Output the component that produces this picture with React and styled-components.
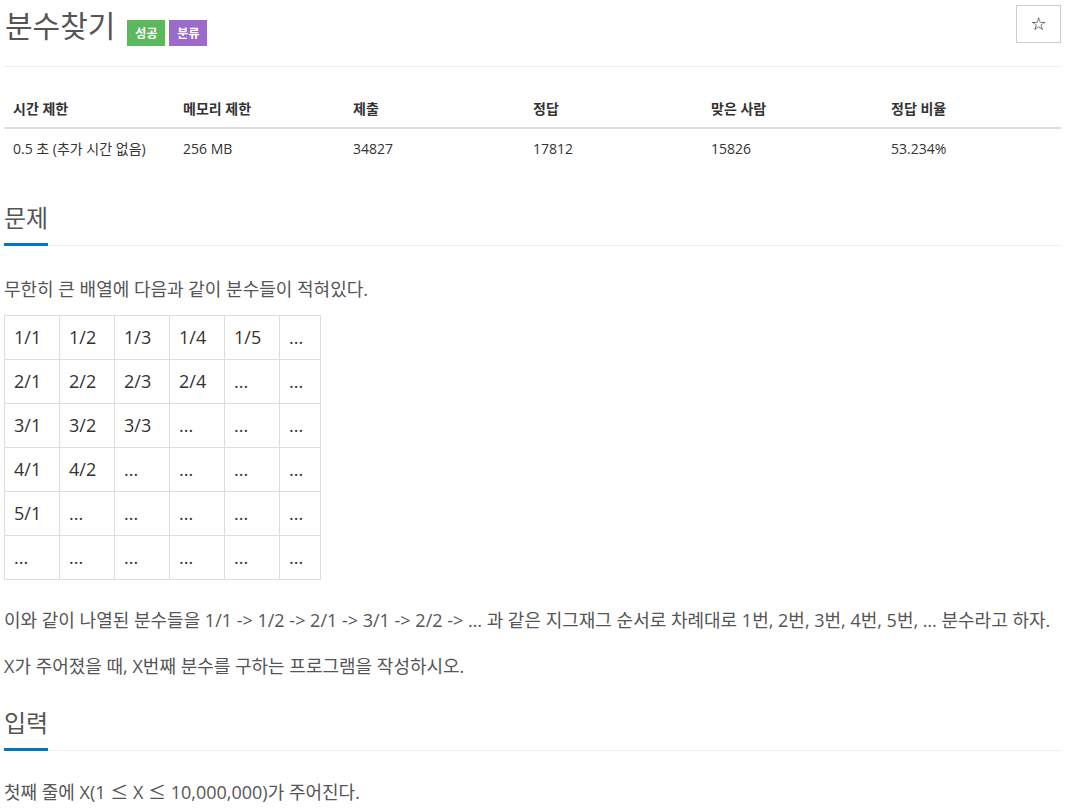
import React from 'react';
import styled, { createGlobalStyle } from 'styled-components';

const GlobalStyle = createGlobalStyle`
  html, body {
    margin: 0;
    padding: 0;
    background: #fff;
  }
  body {
    font-family: "Open Sans", "Noto Sans CJK KR", sans-serif;
    color: #555;
    font-size: 14px;
  }
`;

const Page = styled.div`
  padding: 0 6px 0 4px;
`;

const Header = styled.div`
  display: flex;
  justify-content: space-between;
  align-items: flex-start;
  height: 67px;
  box-sizing: border-box;
  border-bottom: 1px solid #eee;
`;

const TitleRow = styled.div`
  display: flex;
  align-items: flex-start;
  padding-top: 8px;
`;

const Title = styled.h1`
  margin: 0 0 0 1px;
  font-size: 30px;
  font-weight: 400;
  line-height: 36px;
  color: #555;
`;

const Badge = styled.span`
  display: inline-flex;
  align-items: center;
  justify-content: center;
  width: 38px;
  height: 26px;
  margin-left: ${(p) => p.gap || 4}px;
  margin-top: 12px;
  background: ${(p) => p.color};
  color: #fff;
  font-size: 12px;
  font-weight: 700;
`;

const StarButton = styled.button`
  margin-top: 5px;
  width: 45px;
  height: 38px;
  border: 1px solid #ccc;
  background: #fff;
  color: #111;
  font-size: 18px;
  line-height: 1;
  padding: 0;
  font-family: "DejaVu Sans", sans-serif;
`;

const InfoTable = styled.table`
  width: 100%;
  margin-top: 24px;
  border-collapse: collapse;
  table-layout: fixed;
  font-size: 14px;
  color: #333;
`;

const InfoHead = styled.th`
  text-align: left;
  font-weight: 700;
  padding: 8px 9px;
  line-height: 20px;
  border-bottom: 2px solid #ddd;
`;

const InfoCell = styled.td`
  padding: 10px 9px;
  line-height: 20px;
`;

const Headline = styled.div`
  margin-top: ${(p) => p.top}px;
  border-bottom: 1px solid #eee;
`;

const HeadlineText = styled.h2`
  display: inline-block;
  margin: 0 0 -1px;
  font-size: 24px;
  font-weight: 400;
  line-height: 30px;
  padding-bottom: 10px;
  color: #555;
  border-bottom: 3px solid #0076c0;
`;

const Description = styled.div`
  display: flex;
  flex-direction: column;
  align-items: flex-start;
  padding-top: ${(p) => p.top || 28}px;
  font-size: 18px;
  color: #555;
`;

const Para = styled.p`
  margin: 0 0 ${(p) => (p.tight ? 11 : 16)}px;
  line-height: 30px;
`;

const MathSign = styled.span`
  font-family: "Noto Sans CJK KR", sans-serif;
`;

const FracTable = styled.table`
  border-collapse: collapse;
  table-layout: fixed;
  width: 316px;
  margin: 0 0 25px;
  font-size: 18px;
  color: #333;
`;

const FracCell = styled.td`
  border: 1px solid #ddd;
  padding: 10px 9px;
  line-height: 23px;
  height: 23px;
`;

const fractions = [
  ['1/1', '1/2', '1/3', '1/4', '1/5', '...'],
  ['2/1', '2/2', '2/3', '2/4', '...', '...'],
  ['3/1', '3/2', '3/3', '...', '...', '...'],
  ['4/1', '4/2', '...', '...', '...', '...'],
  ['5/1', '...', '...', '...', '...', '...'],
  ['...', '...', '...', '...', '...', '...'],
];

const stats = [
  ['시간 제한', '0.5 초 (추가 시간 없음)', 170],
  ['메모리 제한', '256 MB', 170],
  ['제출', '34827', 180],
  ['정답', '17812', 178],
  ['맞은 사람', '15826', 180],
  ['정답 비율', '53.234%', 0],
];

function App() {
  return (
    <Page>
      <GlobalStyle />
      <Header>
        <TitleRow>
          <Title>분수찾기</Title>
          <Badge color="#5cb85c" gap={12}>성공</Badge>
          <Badge color="#9b6bcc">분류</Badge>
        </TitleRow>
        <StarButton>☆</StarButton>
      </Header>

      <InfoTable>
        <colgroup>
          {stats.map((s, i) => (
            <col key={i} style={s[2] ? { width: s[2] } : undefined} />
          ))}
        </colgroup>
        <thead>
          <tr>
            {stats.map((s) => (
              <InfoHead key={s[0]}>{s[0]}</InfoHead>
            ))}
          </tr>
        </thead>
        <tbody>
          <tr>
            {stats.map((s) => (
              <InfoCell key={s[0]}>{s[1]}</InfoCell>
            ))}
          </tr>
        </tbody>
      </InfoTable>

      <Headline top={34}>
        <HeadlineText>문제</HeadlineText>
      </Headline>
      <Description>
        <Para tight>무한히 큰 배열에 다음과 같이 분수들이 적혀있다.</Para>
        <FracTable>
          <colgroup>
            <col style={{ width: 55 }} />
            <col style={{ width: 55 }} />
            <col style={{ width: 55 }} />
            <col style={{ width: 55 }} />
            <col style={{ width: 55 }} />
            <col style={{ width: 41 }} />
          </colgroup>
          <tbody>
            {fractions.map((row, r) => (
              <tr key={r}>
                {row.map((f, c) => (
                  <FracCell key={c}>{f}</FracCell>
                ))}
              </tr>
            ))}
          </tbody>
        </FracTable>
        <Para>
          이와 같이 나열된 분수들을 1/1 -&gt; 1/2 -&gt; 2/1 -&gt; 3/1 -&gt; 2/2 -&gt; … 과 같은 지그재그 순서로 차례대로 1번, 2번, 3번, 4번, 5번, … 분수라고 하자.
        </Para>
        <Para>X가 주어졌을 때, X번째 분수를 구하는 프로그램을 작성하시오.</Para>
      </Description>

      <Headline top={11}>
        <HeadlineText>입력</HeadlineText>
      </Headline>
      <Description top={25}>
        <Para>
          첫째 줄에 X(1 <MathSign>≤</MathSign> X <MathSign>≤</MathSign> 10,000,000)가 주어진다.
        </Para>
      </Description>
    </Page>
  );
}

export default App;
